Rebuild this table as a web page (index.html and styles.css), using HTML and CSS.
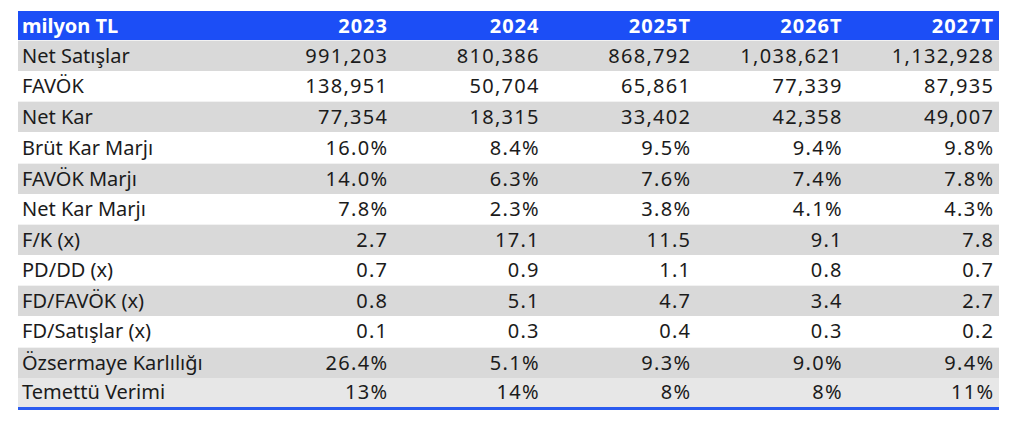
FILE: index.html
```html
<!DOCTYPE html>
<html lang="tr">
<head>
<meta charset="utf-8">
<link rel="stylesheet" href="styles.css">
</head>
<body>
<table class="fin">
  <thead>
    <tr class="head"><th class="lbl">milyon TL</th><th>2023</th><th>2024</th><th>2025T</th><th>2026T</th><th>2027T</th></tr>
  </thead>
  <tbody>
    <tr class="g"><td class="lbl">Net Satışlar</td><td>991,203</td><td>810,386</td><td>868,792</td><td>1,038,621</td><td>1,132,928</td></tr>
    <tr><td class="lbl">FAVÖK</td><td>138,951</td><td>50,704</td><td>65,861</td><td>77,339</td><td>87,935</td></tr>
    <tr class="g"><td class="lbl">Net Kar</td><td>77,354</td><td>18,315</td><td>33,402</td><td>42,358</td><td>49,007</td></tr>
    <tr><td class="lbl">Brüt Kar Marjı</td><td>16.0%</td><td>8.4%</td><td>9.5%</td><td>9.4%</td><td>9.8%</td></tr>
    <tr class="g"><td class="lbl">FAVÖK Marjı</td><td>14.0%</td><td>6.3%</td><td>7.6%</td><td>7.4%</td><td>7.8%</td></tr>
    <tr><td class="lbl">Net Kar Marjı</td><td>7.8%</td><td>2.3%</td><td>3.8%</td><td>4.1%</td><td>4.3%</td></tr>
    <tr class="g"><td class="lbl">F/K (x)</td><td>2.7</td><td>17.1</td><td>11.5</td><td>9.1</td><td>7.8</td></tr>
    <tr><td class="lbl">PD/DD (x)</td><td>0.7</td><td>0.9</td><td>1.1</td><td>0.8</td><td>0.7</td></tr>
    <tr class="g"><td class="lbl">FD/FAVÖK (x)</td><td>0.8</td><td>5.1</td><td>4.7</td><td>3.4</td><td>2.7</td></tr>
    <tr><td class="lbl">FD/Satışlar (x)</td><td>0.1</td><td>0.3</td><td>0.4</td><td>0.3</td><td>0.2</td></tr>
    <tr class="g"><td class="lbl">Özsermaye Karlılığı</td><td>26.4%</td><td>5.1%</td><td>9.3%</td><td>9.0%</td><td>9.4%</td></tr>
    <tr class="last"><td class="lbl">Temettü Verimi</td><td>13%</td><td>14%</td><td>8%</td><td>8%</td><td>11%</td></tr>
  </tbody>
</table>
</body>
</html>
```

FILE: styles.css
```css
html, body {
  margin: 0;
  background: #ffffff;
}
body {
  padding: 11px 0 0 18px;
  font-family: "Noto Sans", "Open Sans", sans-serif;
  color: #1b1b1b;
}
.fin {
  border-collapse: collapse;
  width: 981px;
  table-layout: fixed;
  font-size: 20px;
}
.fin th, .fin td {
  box-sizing: border-box;
  width: 151.5px;
  padding: 0 4.7px 0 4px;
  text-align: right;
  white-space: nowrap;
  letter-spacing: 1.3px;
}
.fin th {
  letter-spacing: 1px;
  padding-right: 5px;
}
.fin .lbl {
  text-align: left;
  width: auto;
  letter-spacing: 0;
}
.fin .head {
  background: #1c4ef6;
  color: #ffffff;
  height: 29px;
}
.fin .head th {
  font-weight: 700;
  line-height: 29px;
}
.fin tbody tr {
  height: 30.67px;
}
.fin tbody td {
  line-height: 28px;
}
.fin tr.g td {
  background: #d9d9d9;
  border-top: 1px solid #f2f2f2;
}
.fin tr.last td {
  background: #e7e7e7;
  border-bottom: 3px solid #2a5bf0;
}
```
